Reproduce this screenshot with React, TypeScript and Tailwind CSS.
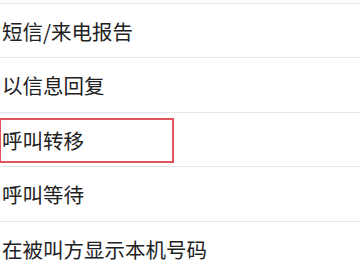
const ITEMS = [
  "短信/来电报告",
  "以信息回复",
  "呼叫转移",
  "呼叫等待",
  "在被叫方显示本机号码",
];

export default function App() {
  return (
    <div className="w-[360px] h-[270px] overflow-hidden bg-white font-['Noto_Sans_CJK_SC','Noto_Sans',sans-serif]">
      <div className="h-[3.5px] border-b border-[#e6e6e6]" />
      {ITEMS.map((label, i) => (
        <div
          key={label}
          className="relative flex h-[54.5px] items-center border-b border-[#e6e6e6] pl-[2px] pt-[1px] text-[20.5px] text-[#222222]"
        >
          <span className="leading-none">{label}</span>
          {i === 2 && (
            <div className="absolute left-[-1px] top-[5px] h-[45px] w-[175px] border-2 border-[#e0555c]" />
          )}
        </div>
      ))}
    </div>
  );
}
